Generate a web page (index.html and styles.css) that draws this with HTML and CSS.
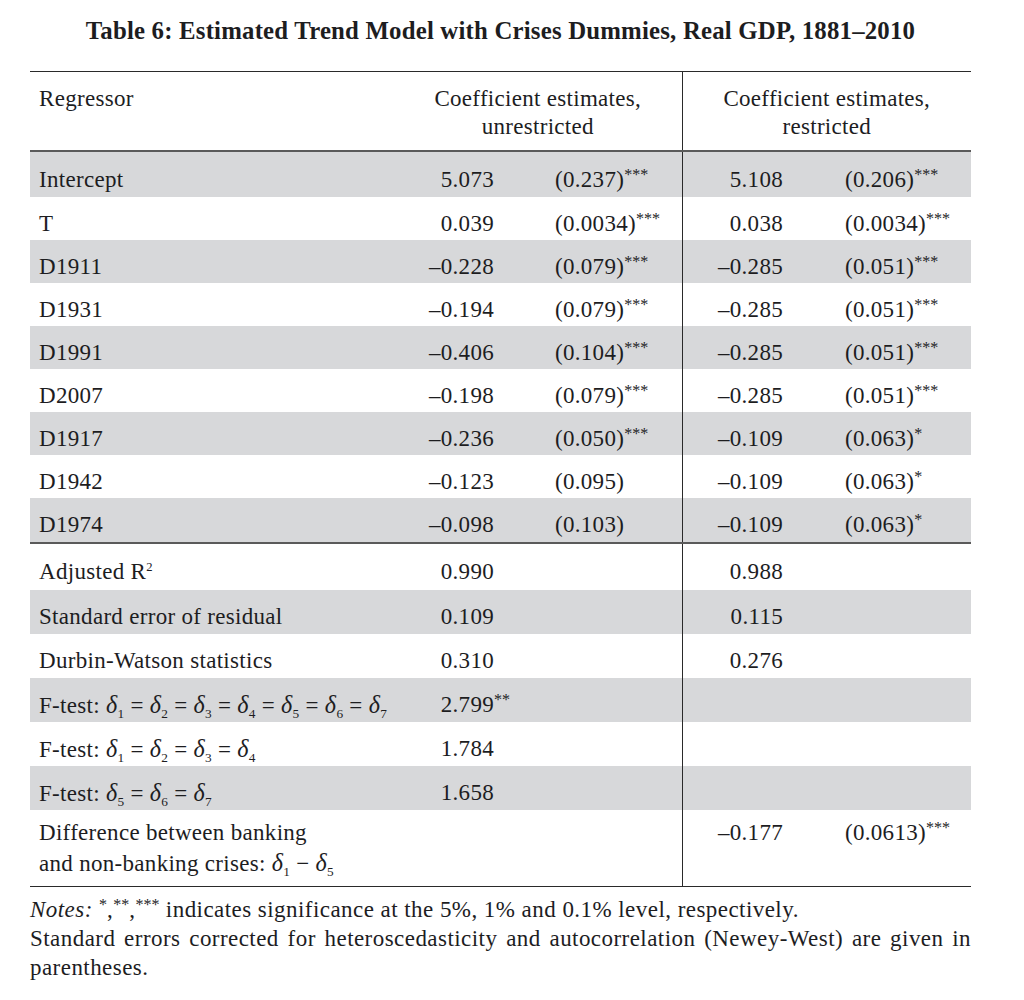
FILE: index.html
```html
<!DOCTYPE html>
<html lang="en">
<head>
<meta charset="utf-8">
<title>Table 6</title>
<link rel="stylesheet" href="styles.css">
</head>
<body>
<div class="page">
  <h1 class="title">Table 6: Estimated Trend Model with Crises Dummies, Real GDP, 1881–2010</h1>
  <table class="tbl">
    <colgroup>
      <col class="c1"><col class="c2"><col class="c3"><col class="c4"><col class="c5">
    </colgroup>
    <thead>
      <tr class="head">
        <th class="lab">Regressor</th>
        <th colspan="2" class="grp">Coefficient estimates,<br>unrestricted</th>
        <th colspan="2" class="grp div">Coefficient estimates,<br>restricted</th>
      </tr>
    </thead>
    <tbody class="main">
      <tr class="sh first"><td class="lab">Intercept</td><td class="num">5.073</td><td class="se">(0.237)<sup>***</sup></td><td class="num div">5.108</td><td class="se">(0.206)<sup>***</sup></td></tr>
      <tr><td class="lab">T</td><td class="num">0.039</td><td class="se">(0.0034)<sup>***</sup></td><td class="num div">0.038</td><td class="se">(0.0034)<sup>***</sup></td></tr>
      <tr class="sh"><td class="lab">D1911</td><td class="num">–0.228</td><td class="se">(0.079)<sup>***</sup></td><td class="num div">–0.285</td><td class="se">(0.051)<sup>***</sup></td></tr>
      <tr><td class="lab">D1931</td><td class="num">–0.194</td><td class="se">(0.079)<sup>***</sup></td><td class="num div">–0.285</td><td class="se">(0.051)<sup>***</sup></td></tr>
      <tr class="sh"><td class="lab">D1991</td><td class="num">–0.406</td><td class="se">(0.104)<sup>***</sup></td><td class="num div">–0.285</td><td class="se">(0.051)<sup>***</sup></td></tr>
      <tr><td class="lab">D2007</td><td class="num">–0.198</td><td class="se">(0.079)<sup>***</sup></td><td class="num div">–0.285</td><td class="se">(0.051)<sup>***</sup></td></tr>
      <tr class="sh"><td class="lab">D1917</td><td class="num">–0.236</td><td class="se">(0.050)<sup>***</sup></td><td class="num div">–0.109</td><td class="se">(0.063)<sup>*</sup></td></tr>
      <tr><td class="lab">D1942</td><td class="num">–0.123</td><td class="se">(0.095)</td><td class="num div">–0.109</td><td class="se">(0.063)<sup>*</sup></td></tr>
      <tr class="sh last"><td class="lab">D1974</td><td class="num">–0.098</td><td class="se">(0.103)</td><td class="num div">–0.109</td><td class="se">(0.063)<sup>*</sup></td></tr>
    </tbody>
    <tbody class="stats">
      <tr class="r-adj"><td class="lab">Adjusted R<sup class="sq">2</sup></td><td class="num">0.990</td><td class="se"></td><td class="num div">0.988</td><td class="se"></td></tr>
      <tr class="sh"><td class="lab">Standard error of residual</td><td class="num">0.109</td><td class="se"></td><td class="num div">0.115</td><td class="se"></td></tr>
      <tr><td class="lab">Durbin-Watson statistics</td><td class="num">0.310</td><td class="se"></td><td class="num div">0.276</td><td class="se"></td></tr>
      <tr class="sh"><td class="lab">F-test: <i class="d">δ</i><sub>1</sub><span class="eq">=</span><i class="d">δ</i><sub>2</sub><span class="eq">=</span><i class="d">δ</i><sub>3</sub><span class="eq">=</span><i class="d">δ</i><sub>4</sub><span class="eq">=</span><i class="d">δ</i><sub>5</sub><span class="eq">=</span><i class="d">δ</i><sub>6</sub><span class="eq">=</span><i class="d">δ</i><sub>7</sub></td><td class="num">2.799<span class="sig"><sup>**</sup></span></td><td class="se"></td><td class="num div"></td><td class="se"></td></tr>
      <tr><td class="lab">F-test: <i class="d">δ</i><sub>1</sub><span class="eq">=</span><i class="d">δ</i><sub>2</sub><span class="eq">=</span><i class="d">δ</i><sub>3</sub><span class="eq">=</span><i class="d">δ</i><sub>4</sub></td><td class="num">1.784</td><td class="se"></td><td class="num div"></td><td class="se"></td></tr>
      <tr class="sh"><td class="lab">F-test: <i class="d">δ</i><sub>5</sub><span class="eq">=</span><i class="d">δ</i><sub>6</sub><span class="eq">=</span><i class="d">δ</i><sub>7</sub></td><td class="num">1.658</td><td class="se"></td><td class="num div"></td><td class="se"></td></tr>
      <tr class="r-diff"><td class="lab">Difference between banking<br>and non-banking crises: <i class="d">δ</i><sub>1</sub><span class="eq">−</span><i class="d">δ</i><sub>5</sub></td><td class="num"></td><td class="se"></td><td class="num div">–0.177</td><td class="se">(0.0613)<sup>***</sup></td></tr>
    </tbody>
  </table>
  <div class="notes">
    <p class="n1"><i>Notes:</i> <sup>*</sup>,<sup>**</sup>,<sup>***</sup> indicates significance at the 5%, 1% and 0.1% level, respectively.</p>
    <p class="n2">Standard errors corrected for heteroscedasticity and autocorrelation (Newey-West) are given in</p>
    <p class="n3">parentheses.</p>
  </div>
</div>
</body>
</html>
```
FILE: styles.css
```css
html, body {
  margin: 0;
  padding: 0;
  background: #ffffff;
}
body {
  font-family: "Liberation Serif", "Times New Roman", serif;
  color: #1d1d1f;
}
.page {
  width: 941px;
  padding: 0 0 0 30px;
}
.title {
  margin: 0;
  padding-top: 16px;
  height: 71px;
  box-sizing: border-box;
  font-size: 24.8px;
  line-height: 30px;
  font-weight: bold;
  text-align: center;
  letter-spacing: 0.2px;
}
.tbl {
  width: 941px;
  border-collapse: collapse;
  table-layout: fixed;
  font-size: 23px;
  letter-spacing: 0.3px;
  border-top: 1.5px solid #2a2a2a;
  border-bottom: 1.5px solid #2a2a2a;
}
.c1 { width: 364px; }
.c2 { width: 126px; }
.c3 { width: 162px; }
.c4 { width: 128px; }
.c5 { width: 161px; }
.tbl th, .tbl td {
  padding: 0;
  font-weight: normal;
  white-space: nowrap;
}
.head th {
  height: 79px;
  vertical-align: top;
  padding-top: 13px;
  line-height: 28px;
  box-sizing: border-box;
}
.head th.lab { text-align: left; padding-left: 9px; }
.head th.grp { text-align: center; }
.tbl thead { border-bottom: 2px solid #5a5a5a; }
.main { border-bottom: 2px solid #5a5a5a; }
.main tr { height: 43px; }
.main tr.first { height: 46px; }
.main tr.last { height: 45px; }
.stats tr { height: 44px; }
.stats tr.r-adj { height: 47px; }
.tbl td {
  vertical-align: middle;
  padding-top: 11px;
  line-height: 30px;
}
.sh td { background: #d7d8da; }
.div { border-left: 1px solid #2a2a2a; }
.lab { padding-left: 9px !important; text-align: left; }
.num { text-align: right; padding-right: 26px !important; }
td.num.div { padding-right: 27px !important; }
.se { text-align: left; padding-left: 35px !important; }
sup {
  font-size: 0.7em;
  line-height: 0;
  vertical-align: 0.45em;
  letter-spacing: 0;
}
sup.sq { font-size: 0.55em; vertical-align: 0.6em; }
.sig { display: inline-block; width: 0; white-space: nowrap; }
sub {
  font-size: 0.58em;
  line-height: 0;
  vertical-align: -0.35em;
}
.d { font-style: italic; font-size: 1.05em; }
.eq { padding: 0 6px; }
.r-diff td { vertical-align: top; padding-top: 8px; height: 77px; box-sizing: border-box; }
.notes {
  font-size: 23px;
  line-height: 29px;
  padding-top: 8px;
  letter-spacing: 0.45px;
}
.notes sup { font-size: 0.7em; }
.notes p { margin: 0; }
.n2 { text-align: justify; text-align-last: justify; }
```
